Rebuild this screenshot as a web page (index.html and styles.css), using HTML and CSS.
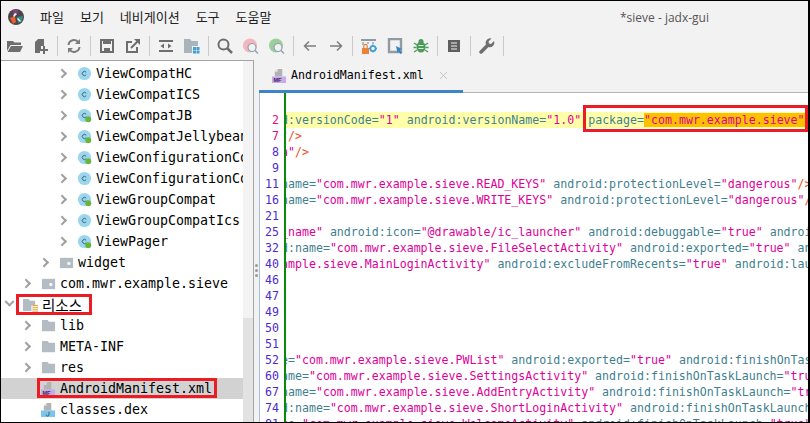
FILE: index.html
```html
<!DOCTYPE html>
<html lang="ko">
<head>
    <meta charset="UTF-8">
    <title>*sieve - jadx-gui</title>
    <link rel="stylesheet" href="styles.css">
</head>
<body>
    <svg class="defs" width="0" height="0">
        <symbol id="cls" viewBox="0 0 16 16">
            <circle cx="8" cy="8" r="7" fill="#9ad7ef"/>
            <path d="M10.400 6.300A3 3 0 1 0 10.400 9.700" fill="none" stroke="#3f5b68" stroke-width="1.300" transform="translate(2 2) scale(.75)"/>
        </symbol>
        <symbol id="cls-dot" viewBox="0 0 16 16">
            <use href="#cls"/>
            <circle cx="12" cy="12" r="3.200" fill="#69b53c"/>
        </symbol>
        <symbol id="pkg" viewBox="0 0 16 16">
            <path d="M1 3h14v11H1z" fill="#b3bcc2"/>
            <circle cx="10.500" cy="9" r="1.800" fill="#f4f6f7"/>
        </symbol>
        <symbol id="folder" viewBox="0 0 16 16">
            <path d="M1 2h6l1.500 2H15v10H1z" fill="#b3bcc2"/>
        </symbol>
        <symbol id="doc-mf" viewBox="0 0 16 16">
            <path d="M6 1h5v8H3V4z" fill="#b3b3b3"/>
            <path d="M6 1v3H3z" fill="#e6e6e6"/>
            <rect x="0" y="9" width="15" height="7" fill="#c9a9ea"/>
            <text x="1.500" y="15" class="tag-mf">MF</text>
        </symbol>
    </svg>

    <div class="window">
        <header class="menubar">
            <svg class="logo" width="16" height="16" viewBox="0 0 16 16">
                <circle cx="8" cy="8" r="8" fill="#4a4548"/>
                <path d="M2 9l5-2 1 6-3 2z" fill="#e8612c"/>
                <path d="M9 8l6-1-1 5-4 2z" fill="#2d8f86"/>
                <path d="M5 1h5l-1 5H5z" fill="#8a3d8f"/>
                <path d="M7 4l2 1-3 3-1-1zM10 9l3 3-1 1-3-3z" fill="#f3f3f3"/>
            </svg>
            <nav class="menu">
                <span>파일</span>
                <span>보기</span>
                <span>네비게이션</span>
                <span>도구</span>
                <span>도움말</span>
            </nav>
            <span class="title">*sieve - jadx-gui</span>
        </header>

        <div class="toolbar">
            <span class="tool"><svg width="16" height="16" viewBox="0 0 16 16"><path d="M0 3h6l1.500 1.500H14V7H3.500L0 13z" fill="#6e6e6e"/><path d="M4 8h12l-3 6H0.500z" fill="#6e6e6e"/></svg></span>
            <span class="tool"><svg width="16" height="16" viewBox="0 0 16 16"><path d="M5 1h6v7H8v3H2V4z" fill="#6e6e6e"/><path d="M2 9h5v6H2z" fill="#6e6e6e"/><path d="M11 8v8M7 12h8" stroke="#6e6e6e" stroke-width="2"/></svg></span>
            <i class="sep"></i>
            <span class="tool"><svg width="16" height="16" viewBox="0 0 16 16" fill="none" stroke="#7a7a7a" stroke-width="2"><path d="M2.500 7A5.500 5.500 0 0 1 12.500 4.500"/><path d="M13.500 9A5.500 5.500 0 0 1 3.500 11.500"/><path d="M14 1v5h-5z" fill="#7a7a7a" stroke="none"/><path d="M2 15v-5h5z" fill="#7a7a7a" stroke="none"/></svg></span>
            <i class="sep"></i>
            <span class="tool"><svg width="16" height="16" viewBox="0 0 16 16"><path d="M2 2h12v12H2z" fill="none" stroke="#6e6e6e" stroke-width="2"/><path d="M4 2h8v4H4zM5 10h6v4H5z" fill="#6e6e6e"/></svg></span>
            <span class="tool"><svg width="16" height="16" viewBox="0 0 16 16" fill="none" stroke="#6e6e6e" stroke-width="2"><path d="M7 4H2v10h10V9"/><path d="M6 10l7-7"/><path d="M9 1h6v6z" fill="#6e6e6e" stroke="none"/></svg></span>
            <i class="sep"></i>
            <span class="tool"><svg width="16" height="16" viewBox="0 0 16 16"><path d="M1 2h14v2H1zM1 12h14v2H1z" fill="#6e6e6e"/><path d="M6 5.500v5L2.500 8zM10 5.500v5L13.500 8z" fill="#6e6e6e"/></svg></span>
            <span class="tool"><svg width="16" height="16" viewBox="0 0 16 16"><path d="M0 1h6l1.500 2H14v5H8v7H0z" fill="#a9b4bb"/><path d="M9 9h3v3H9zM12.500 9h3v3h-3zM9 12.500h3v3H9zM12.500 12.500h3v3h-3z" fill="#3f9fd8"/></svg></span>
            <i class="sep"></i>
            <span class="tool"><svg width="16" height="16" viewBox="0 0 16 16" fill="none" stroke="#6e6e6e"><circle cx="6.500" cy="6.500" r="5" stroke-width="2"/><path d="M10 10l5 5" stroke-width="2.500"/></svg></span>
            <span class="tool"><svg width="16" height="16" viewBox="0 0 16 16"><circle cx="7" cy="7.500" r="7" fill="#f5b5bd"/><circle cx="9" cy="9.500" r="4" fill="#f2f2f2" stroke="#8fa3ad" stroke-width="1.200"/><path d="M12 12.500l3 3" stroke="#8fa3ad" stroke-width="1.500"/></svg></span>
            <span class="tool"><svg width="16" height="16" viewBox="0 0 16 16"><circle cx="7" cy="7.500" r="7" fill="#9ccf9c"/><circle cx="9" cy="9.500" r="4" fill="#f2f2f2" stroke="#8fa3ad" stroke-width="1.200"/><path d="M12 12.500l3 3" stroke="#8fa3ad" stroke-width="1.500"/></svg></span>
            <i class="sep"></i>
            <span class="tool"><svg width="16" height="16" viewBox="0 0 16 16" fill="none" stroke="#7d7d7d" stroke-width="1.500"><path d="M14 8H3M7 3.500L2.500 8 7 12.500"/></svg></span>
            <span class="tool"><svg width="16" height="16" viewBox="0 0 16 16" fill="none" stroke="#7d7d7d" stroke-width="1.500"><path d="M2 8h11M9 3.500L13.500 8 9 12.500"/></svg></span>
            <i class="sep"></i>
            <span class="tool"><svg width="16" height="16" viewBox="0 0 16 16"><path d="M0 1h15v2H0z" fill="#8f9aa3"/><path d="M1 4h2v3H1zM6 4h2v2H6zM11 4h2v2h-2z" fill="#b3bcc2"/><path d="M1 10h7v6H1z" fill="#e8833a"/><path d="M2.800 10V8a1.700 1.700 0 0 1 3.400 0v2" fill="none" stroke="#e8833a" stroke-width="1.200"/><circle cx="12" cy="10.500" r="2.600" fill="none" stroke="#3f9fd8" stroke-width="1.800"/><path d="M12 6.500v1.500M12 13v1.500M8 10.500h1.500M14.500 10.500H16" stroke="#3f9fd8" stroke-width="1.400"/></svg></span>
            <span class="tool"><svg width="16" height="16" viewBox="0 0 16 16"><path d="M2 1h12v13H2z" fill="none" stroke="#8f9aa3" stroke-width="2.400"/><path d="M9 8l6 3-2.300.8L15 15l-1.500 1-2-2.800L10.500 15z" fill="#2f86c5"/></svg></span>
            <span class="tool"><svg width="16" height="16" viewBox="0 0 16 16"><ellipse cx="8" cy="9" rx="4.500" ry="5.500" fill="#4c9a5b"/><circle cx="8" cy="3.500" r="2.500" fill="#4c9a5b"/><path d="M1 5l3 2M15 5l-3 2M0.500 9.500h3M15.500 9.500h-3M1 14l3-2M15 14l-3-2" stroke="#4c9a5b" stroke-width="1.400"/><path d="M5.500 7.500h5M5.500 10.500h5" stroke="#d5ead9" stroke-width="1.200"/></svg></span>
            <i class="sep"></i>
            <span class="tool"><svg width="16" height="16" viewBox="0 0 16 16"><path d="M2 2h12v12H2z" fill="#5f5f5f"/><path d="M5 5h6M5 8h6M5 11h6" stroke="#f2f2f2" stroke-width="1.200"/></svg></span>
            <i class="sep"></i>
            <span class="tool"><svg width="16" height="16" viewBox="0 0 16 16"><path d="M15 3l-3 3-2-.5L9.500 3.500 12.500.5A4.500 4.500 0 0 0 7 6.500L.8 12.700a1.700 1.700 0 0 0 2.500 2.500L9.500 9A4.500 4.500 0 0 0 15 3z" fill="#6e6e6e"/></svg></span>
            <i class="sep"></i>
        </div>

        <main class="split">
            <aside class="tree-pane">
                <ul class="tree">
                    <li class="d3"><i class="chev"></i><svg class="ic"><use href="#cls"/></svg>ViewCompatHC</li>
                    <li class="d3"><i class="chev"></i><svg class="ic"><use href="#cls"/></svg>ViewCompatICS</li>
                    <li class="d3"><i class="chev"></i><svg class="ic"><use href="#cls-dot"/></svg>ViewCompatJB</li>
                    <li class="d3"><i class="chev"></i><svg class="ic"><use href="#cls-dot"/></svg>ViewCompatJellybeanMr1</li>
                    <li class="d3"><i class="chev"></i><svg class="ic"><use href="#cls-dot"/></svg>ViewConfigurationCompat</li>
                    <li class="d3"><i class="chev"></i><svg class="ic"><use href="#cls"/></svg>ViewConfigurationCompatFroyo</li>
                    <li class="d3"><i class="chev"></i><svg class="ic"><use href="#cls-dot"/></svg>ViewGroupCompat</li>
                    <li class="d3"><i class="chev"></i><svg class="ic"><use href="#cls"/></svg>ViewGroupCompatIcs</li>
                    <li class="d3"><i class="chev"></i><svg class="ic"><use href="#cls-dot"/></svg>ViewPager</li>
                    <li class="d2"><i class="chev"></i><svg class="ic"><use href="#pkg"/></svg>widget</li>
                    <li class="d1"><i class="chev"></i><svg class="ic"><use href="#pkg"/></svg>com.mwr.example.sieve</li>
                    <li class="d0"><i class="chev open"></i><span class="mark mark-res"><svg class="ic" viewBox="0 0 16 16"><path d="M0 2h6l1.500 2H13v5H9v6H0z" fill="#b3bcc2"/><path d="M10 9h6M10 11h6M10 13h6M10 15h6" stroke="#e0a030" stroke-width="1"/></svg><span class="res-label">리소스</span></span></li>
                    <li class="d1"><i class="chev"></i><svg class="ic"><use href="#folder"/></svg>lib</li>
                    <li class="d1"><i class="chev"></i><svg class="ic"><use href="#folder"/></svg>META-INF</li>
                    <li class="d1"><i class="chev"></i><svg class="ic"><use href="#folder"/></svg>res</li>
                    <li class="d1 selected"><i class="chev none"></i><span class="mark mark-file"><svg class="ic"><use href="#doc-mf"/></svg>AndroidManifest.xml</span></li>
                    <li class="d1"><i class="chev none"></i><svg class="ic" viewBox="0 0 16 16"><path d="M6 1h5v8H3V4z" fill="#b3b3b3"/><path d="M6 1v3H3z" fill="#e6e6e6"/><rect x="0" y="9" width="15" height="7" fill="#7cc4e8"/><path d="M8.500 10.500v3a1.500 1.500 0 0 1-3 0" fill="none" stroke="#2f5d78"/></svg>classes.dex</li>
                </ul>
                <div class="tree-scroll"><div class="tree-thumb"></div></div>
            </aside>

            <div class="divider"><i></i><i></i><i></i></div>

            <section class="editor-pane">
                <div class="tabs">
                    <div class="tab">
                        <svg class="ic"><use href="#doc-mf"/></svg>
                        <span>AndroidManifest.xml</span>
                        <svg class="tab-close" width="9" height="9" viewBox="0 0 9 9"><path d="M1 1l7 7M8 1L1 8" stroke="#c4c4c4" stroke-width="1"/></svg>
                    </div>
                </div>
                <div class="editor">
                    <div class="gutter">
                        <div>&nbsp;</div>
                        <div class="hot">2</div>
                        <div class="hot">7</div>
                        <div>8</div>
                        <div>9</div>
                        <div>11</div>
                        <div>16</div>
                        <div>21</div>
                        <div>25</div>
                        <div>32</div>
                        <div>40</div>
                        <div>46</div>
                        <div>47</div>
                        <div>49</div>
                        <div>50</div>
                        <div>51</div>
                        <div>52</div>
                        <div>60</div>
                        <div>67</div>
                        <div>74</div>
                        <div>81</div>
                    </div>
                    <div class="code">
                        <div class="ln">&nbsp;</div>
                        <div class="ln line-hl"><span class="an">d:versionCode=</span><span class="av">"1"</span> <span class="an">android:versionName=</span><span class="av">"1.0"</span> <span class="mark mark-pkg"><span class="an">package=</span><span class="av found">"com.mwr.example.sieve"</span></span><span class="dl">&gt;</span></div>
                        <div class="ln"><span class="dl">"/&gt;</span></div>
                        <div class="ln"><span class="av">a"</span><span class="dl">/&gt;</span></div>
                        <div class="ln">&nbsp;</div>
                        <div class="ln"><span class="an">name=</span><span class="av">"com.mwr.example.sieve.READ_KEYS"</span> <span class="an">android:protectionLevel=</span><span class="av">"dangerous"</span><span class="dl">/&gt;</span></div>
                        <div class="ln"><span class="an">name=</span><span class="av">"com.mwr.example.sieve.WRITE_KEYS"</span> <span class="an">android:protectionLevel=</span><span class="av">"dangerous"</span><span class="dl">/&gt;</span></div>
                        <div class="ln">&nbsp;</div>
                        <div class="ln"><span class="av">_name"</span> <span class="an">android:icon=</span><span class="av">"@drawable/ic_launcher"</span> <span class="an">android:debuggable=</span><span class="av">"true"</span> <span class="an">android:allowBackup=</span><span class="av">"true"</span><span class="dl">&gt;</span></div>
                        <div class="ln"><span class="an">d:name=</span><span class="av">"com.mwr.example.sieve.FileSelectActivity"</span> <span class="an">android:exported=</span><span class="av">"true"</span> <span class="an">android:finishOnTaskLaunch=</span><span class="av">"true"</span><span class="dl">/&gt;</span></div>
                        <div class="ln"><span class="av">ample.sieve.MainLoginActivity"</span> <span class="an">android:excludeFromRecents=</span><span class="av">"true"</span> <span class="an">android:launchMode=</span><span class="av">"singleTask"</span><span class="dl">&gt;</span></div>
                        <div class="ln">&nbsp;</div>
                        <div class="ln">&nbsp;</div>
                        <div class="ln">&nbsp;</div>
                        <div class="ln">&nbsp;</div>
                        <div class="ln">&nbsp;</div>
                        <div class="ln"><span class="an">e=</span><span class="av">"com.mwr.example.sieve.PWList"</span> <span class="an">android:exported=</span><span class="av">"true"</span> <span class="an">android:finishOnTaskLaunch=</span><span class="av">"true"</span><span class="dl">/&gt;</span></div>
                        <div class="ln"><span class="an">ame=</span><span class="av">"com.mwr.example.sieve.SettingsActivity"</span> <span class="an">android:finishOnTaskLaunch=</span><span class="av">"true"</span><span class="dl">/&gt;</span></div>
                        <div class="ln"><span class="an">name=</span><span class="av">"com.mwr.example.sieve.AddEntryActivity"</span> <span class="an">android:finishOnTaskLaunch=</span><span class="av">"true"</span><span class="dl">/&gt;</span></div>
                        <div class="ln"><span class="an">d:name=</span><span class="av">"com.mwr.example.sieve.ShortLoginActivity"</span> <span class="an">android:finishOnTaskLaunch=</span><span class="av">"true"</span><span class="dl">/&gt;</span></div>
                        <div class="ln"><span class="an">me=</span><span class="av">"com.mwr.example.sieve.WelcomeActivity"</span> <span class="an">android:finishOnTaskLaunch=</span><span class="av">"true"</span><span class="dl">/&gt;</span></div>
                    </div>
                </div>
            </section>
        </main>
    </div>
</body>
</html>
```

FILE: styles.css
```css
html, body { margin: 0; height: 100%; overflow: hidden; }
body { background: #f2f2f2; font-family: "Noto Sans", "Noto Sans CJK KR", sans-serif; color: #000; }
.defs { position: absolute; }
.window { box-sizing: border-box; height: 423px; border: solid #000; border-width: 1px 2px 1px 1px; display: flex; flex-direction: column; background: #f2f2f2; overflow: hidden; }

/* menu + title */
.menubar { height: 31px; display: flex; align-items: center; flex: none; position: relative; padding-left: 7px; }
.logo { flex: none; }
.menu { display: flex; gap: 16px; margin-left: 16px; font: 13px "Noto Sans CJK KR", sans-serif; color: #222; }
.title { position: absolute; left: 619px; top: 8px; font: 12px "Open Sans", sans-serif; color: #555; }

/* toolbar */
.toolbar { height: 28px; flex: none; display: flex; align-items: center; padding-left: 1px; }
.tool { width: 26px; height: 20px; display: flex; align-items: center; justify-content: center; flex: none; }
.sep { width: 1px; height: 20px; background: #c9c9c9; margin: 0 3px; flex: none; }

.split { flex: 1; display: flex; min-height: 0; }

/* left tree */
.tree-pane { width: 252px; flex: none; display: flex; background: #fff; border-top: 1px solid #a5a5a5; border-right: 1px solid #a5a5a5; overflow: hidden; }
.tree { flex: 1; min-width: 0; list-style: none; margin: 0; padding: 2px 0 0; overflow: hidden; font: 13.3px "DejaVu Sans Mono", "Noto Sans CJK KR", monospace; }
.tree li { height: 21px; display: flex; align-items: center; white-space: nowrap; }
.tree li.selected { background: #d2d2d2; }
.d0 { padding-left: 5px; }
.d1 { padding-left: 23px; }
.d2 { padding-left: 41px; }
.d3 { padding-left: 59px; }
.chev { width: 7px; height: 7px; flex: none; box-sizing: border-box; border: solid #a0a0a0; border-width: 2px 2px 0 0; transform: rotate(45deg) translate(-1px, 1px); margin-right: 10px; }
.chev.open { transform: rotate(135deg) translate(-2px, 2px); }
.chev.none { visibility: hidden; }
.ic { width: 15px; height: 15px; flex: none; margin-right: 4px; }
.tag-mf { font: bold 6px "Liberation Sans", sans-serif; fill: #3a2a55; }
.res-label { font: 14.5px "Noto Sans CJK KR", sans-serif; line-height: 17px; }
.tree-scroll { width: 10px; flex: none; background: #f3f3f3; display: flex; flex-direction: column; justify-content: flex-end; }
.tree-thumb { height: 104px; background: #e2e2e2; }

/* red annotation boxes */
.mark { position: relative; display: inline-flex; align-items: center; }
.mark::after { content: ""; position: absolute; box-sizing: border-box; border: 3px solid #ec1c24; }
.mark-res::after { left: -7px; right: -10px; top: -2px; bottom: -2px; }
.mark-file::after { left: -4px; right: -5px; top: -3px; bottom: -2px; }
.mark-pkg { display: inline-block; height: 16px; vertical-align: top; }
.mark-pkg::after { left: -5px; right: -3px; top: -7px; bottom: -4px; }

.divider { width: 5px; flex: none; display: flex; flex-direction: column; align-items: center; justify-content: center; gap: 2px; padding-top: 58px; box-sizing: border-box; }
.divider i { width: 3px; height: 3px; border-radius: 50%; background: #9a9a9a; }

/* right editor */
.editor-pane { flex: 1; min-width: 0; display: flex; flex-direction: column; }
.tabs { height: 33px; flex: none; box-sizing: border-box; border-bottom: 1px solid #b5b5b5; }
.tab { width: 204px; height: 33px; box-sizing: border-box; border-bottom: 3px solid #3d85c6; display: flex; align-items: center; padding: 0 0 0 13px; font: 11.6px "DejaVu Sans Mono", monospace; }
.tab .ic { margin-right: 4px; }
.tab-close { margin-left: 15px; }
.editor { flex: 1; min-height: 0; display: flex; background: #fff; border-left: 1px solid #a9bddc; font: 11.6px/16px "DejaVu Sans Mono", monospace; padding-top: 3px; overflow: hidden; }
.gutter { width: 24px; flex: none; box-sizing: border-box; padding-right: 5px; text-align: right; color: #4b2bd0; }
.gutter .hot { color: #e0107a; }
.code { flex: 1; min-width: 0; border-left: 2px solid #0a8a0a; overflow: hidden; margin-top: -3px; padding-top: 3px; }
.ln { height: 16px; margin-left: -5px; width: 600px; white-space: pre; }
.line-hl { background: #ffffaa; }
.an { color: #3f7f8f; }
.av { color: #dd0099; }
.dl { color: #f0501e; }
.found { background: #ffc000; }
```
